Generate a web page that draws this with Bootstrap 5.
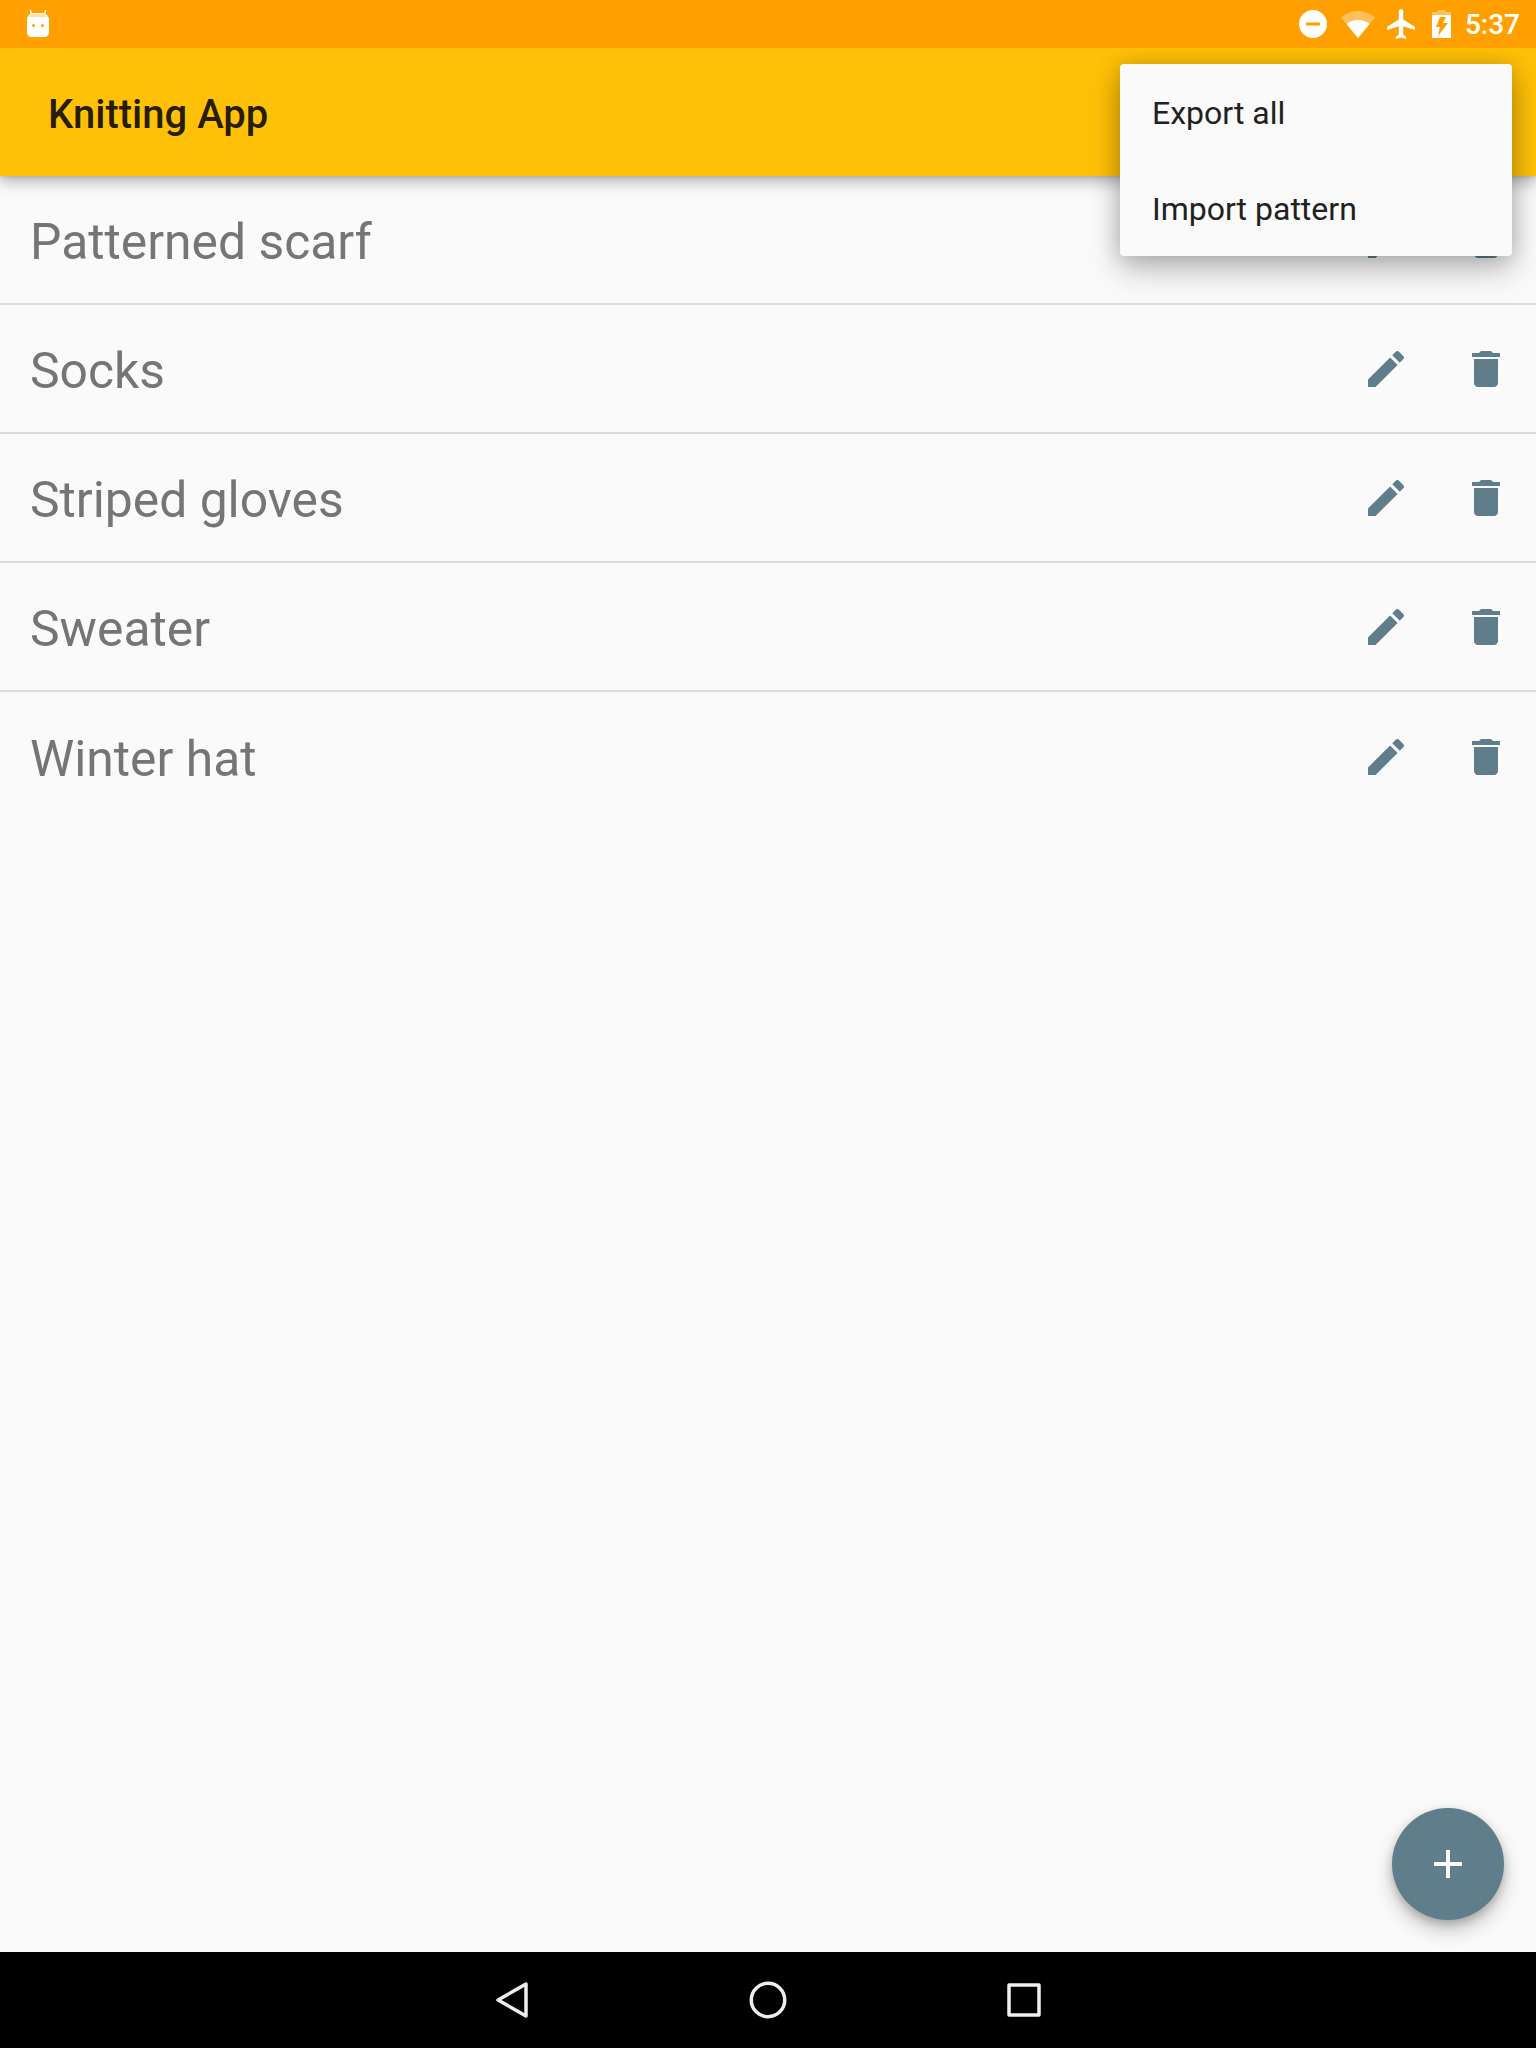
<!DOCTYPE html>
<html lang="en">
<head>
<meta charset="utf-8">
<title>Knitting App</title>
<link href="https://cdn.jsdelivr.net/npm/bootstrap@5.3.0/dist/css/bootstrap.min.css" rel="stylesheet">
<style>
html,body{height:100%;margin:0}
body{font-family:Roboto,"Liberation Sans",sans-serif;background:#fafafa}
.screen{height:2048px;overflow:hidden}
.status-strip{height:48px;background:#ffa000;color:#fff;z-index:30;padding:0 16px 0 27px}
.status-strip svg{display:block;fill:#fff}
.clock{font-size:28px;font-weight:500;line-height:48px;margin-left:14px;padding-top:2px}
.st-wifi{margin-left:14px}
.st-plane{margin-left:12px}
.st-batt{margin-left:17px}
.app-strip.navbar{height:128px;background:#ffc107;padding:6px 0 0 48px;z-index:20;box-shadow:0 6px 14px rgba(0,0,0,.28),0 1px 4px rgba(0,0,0,.12)}
.app-title.navbar-brand{font-size:40px;font-weight:500;color:rgba(0,0,0,.87);margin:0;padding:0;line-height:48px}
.content-area{background:#fafafa;min-height:0}
.knit-row.list-group-item{height:129px;padding:0 26px 0 30px;background:#fafafa;border-color:#dcdcdc;border-width:0 0 2px;border-radius:0}
.knit-name{font-size:49.800px;line-height:56px;color:#757575;padding-top:4px}
.knit-actions{gap:52px;padding-top:1px}
.knit-actions svg{width:48px;height:48px;fill:#607d8b;display:block}
.overflow-menu.dropdown-menu{position:absolute;top:-112px;left:1120px;right:24px;width:392px;min-width:0;padding:0;margin:0;background:#fafafa;border:0;border-radius:4px;z-index:25;box-shadow:0 14px 32px rgba(0,0,0,.22),0 2px 24px rgba(0,0,0,.2)}
.overflow-menu .dropdown-item{height:96px;padding:2px 32px 0;display:flex;align-items:center;font-size:32px;color:#212121}
.fab-add.btn{position:absolute;left:1392px;top:1632px;width:112px;height:112px;border:0;border-radius:50%;padding:0;background:#607d8b;box-shadow:0 10px 20px rgba(0,0,0,.22),0 4px 8px rgba(0,0,0,.18)}
.fab-add svg{display:block;margin:auto}
.nav-strip{height:96px;background:#000;z-index:30}
.nav-slot{width:256px}
.nav-slot svg{display:block;fill:none;stroke:#eee;stroke-width:3.500;stroke-linejoin:round}
</style>
</head>
<body>
<div class="screen d-flex flex-column">
  <div class="status-strip d-flex align-items-center flex-shrink-0 position-relative">
    <svg width="22" height="28" viewBox="0 0 22 28"><path d="M4.500 4.500 3.500 0.500M17.500 4.500 18.500 0.500" stroke="#fff" stroke-width="1.400" fill="none" stroke-linecap="round"/><path fill-rule="evenodd" d="M7 3h8c3.900 0 7 3 7 6.500V22c0 3-2 5-5 5H5c-3 0-5-2-5-5V9.500C0 6 3.100 3 7 3zM6.500 14a1.500 1.500 0 1 0 0 3 1.500 1.500 0 0 0 0-3zm9 0a1.500 1.500 0 1 0 0 3 1.500 1.500 0 0 0 0-3z"/><path fill="#ffdf9f" d="M7 4h8c2.400 0 4.400 1.100 5.500 3h-19C2.600 5.100 4.600 4 7 4z"/></svg>
    <div class="ms-auto d-flex align-items-center">
      <svg width="28" height="28" viewBox="2 2 20 20"><path d="M12 2C6.480 2 2 6.480 2 12s4.480 10 10 10 10-4.480 10-10S17.520 2 12 2zm5 11H7v-2h10v2z"/></svg>
      <svg class="st-wifi" width="34" height="28" viewBox="0 0 34 28"><path opacity=".35" d="M0 7.500C4.500 3.500 10.500 1 17 1s12.500 2.500 17 6.500L17 28z"/><path d="M5.500 14C9 11.500 12.800 10 17 10s8 1.500 11.500 4L17 28z"/></svg>
      <svg class="st-plane" width="28" height="30" viewBox="2 2 19 20" preserveAspectRatio="none"><path d="M21 16v-2l-8-5V3.500c0-.830-.670-1.500-1.500-1.500S10 2.670 10 3.500V9l-8 5v2l8-2.500V19l-2 1.500V22l3.500-1 3.500 1v-1.500L13 19v-5.500l8 2.500z"/></svg>
      <svg class="st-batt" width="19" height="28" viewBox="0 0 19 28"><path opacity=".35" d="M5.500 0h8v2H19v3H0V2h5.500z"/><path fill-rule="evenodd" d="M0 5h19v23H0zM8 7 4 17h4l-2 9 10-13h-5l3-6z"/></svg>
      <span class="clock">5:37</span>
    </div>
  </div>

  <nav class="navbar app-strip flex-shrink-0 position-relative">
    <span class="navbar-brand app-title">Knitting App</span>
  </nav>

  <main class="content-area flex-grow-1 position-relative">
    <div class="list-group list-group-flush">
      <div class="list-group-item knit-row d-flex align-items-center justify-content-between">
        <span class="knit-name">Patterned scarf</span>
        <div class="knit-actions d-flex">
          <svg viewBox="0 0 24 24"><path d="M3 17.250V21h3.750L17.810 9.940l-3.750-3.750L3 17.250zM20.710 7.040c.390-.390.390-1.020 0-1.410l-2.340-2.340c-.390-.390-1.020-.390-1.410 0l-1.830 1.830 3.750 3.750 1.830-1.830z"/></svg>
          <svg viewBox="0 0 24 24"><path d="M6 19c0 1.100.9 2 2 2h8c1.100 0 2-.9 2-2V7H6v12zM19 4h-3.500l-1-1h-5l-1 1H5v2h14V4z"/></svg>
        </div>
      </div>
      <div class="list-group-item knit-row d-flex align-items-center justify-content-between">
        <span class="knit-name">Socks</span>
        <div class="knit-actions d-flex">
          <svg viewBox="0 0 24 24"><path d="M3 17.250V21h3.750L17.810 9.940l-3.750-3.750L3 17.250zM20.710 7.040c.390-.390.390-1.020 0-1.410l-2.340-2.340c-.390-.390-1.020-.390-1.410 0l-1.830 1.830 3.750 3.750 1.830-1.830z"/></svg>
          <svg viewBox="0 0 24 24"><path d="M6 19c0 1.100.9 2 2 2h8c1.100 0 2-.9 2-2V7H6v12zM19 4h-3.500l-1-1h-5l-1 1H5v2h14V4z"/></svg>
        </div>
      </div>
      <div class="list-group-item knit-row d-flex align-items-center justify-content-between">
        <span class="knit-name">Striped gloves</span>
        <div class="knit-actions d-flex">
          <svg viewBox="0 0 24 24"><path d="M3 17.250V21h3.750L17.810 9.940l-3.750-3.750L3 17.250zM20.710 7.040c.390-.390.390-1.020 0-1.410l-2.340-2.340c-.390-.390-1.020-.390-1.410 0l-1.830 1.830 3.750 3.750 1.830-1.830z"/></svg>
          <svg viewBox="0 0 24 24"><path d="M6 19c0 1.100.9 2 2 2h8c1.100 0 2-.9 2-2V7H6v12zM19 4h-3.500l-1-1h-5l-1 1H5v2h14V4z"/></svg>
        </div>
      </div>
      <div class="list-group-item knit-row d-flex align-items-center justify-content-between">
        <span class="knit-name">Sweater</span>
        <div class="knit-actions d-flex">
          <svg viewBox="0 0 24 24"><path d="M3 17.250V21h3.750L17.810 9.940l-3.750-3.750L3 17.250zM20.710 7.040c.390-.390.390-1.020 0-1.410l-2.340-2.340c-.390-.390-1.020-.390-1.410 0l-1.830 1.830 3.750 3.750 1.830-1.830z"/></svg>
          <svg viewBox="0 0 24 24"><path d="M6 19c0 1.100.9 2 2 2h8c1.100 0 2-.9 2-2V7H6v12zM19 4h-3.500l-1-1h-5l-1 1H5v2h14V4z"/></svg>
        </div>
      </div>
      <div class="list-group-item knit-row d-flex align-items-center justify-content-between">
        <span class="knit-name">Winter hat</span>
        <div class="knit-actions d-flex">
          <svg viewBox="0 0 24 24"><path d="M3 17.250V21h3.750L17.810 9.940l-3.750-3.750L3 17.250zM20.710 7.040c.390-.390.390-1.020 0-1.410l-2.340-2.340c-.390-.390-1.020-.390-1.410 0l-1.830 1.830 3.750 3.750 1.830-1.830z"/></svg>
          <svg viewBox="0 0 24 24"><path d="M6 19c0 1.100.9 2 2 2h8c1.100 0 2-.9 2-2V7H6v12zM19 4h-3.500l-1-1h-5l-1 1H5v2h14V4z"/></svg>
        </div>
      </div>
    </div>

    <ul class="dropdown-menu show overflow-menu">
      <li><a class="dropdown-item" href="#">Export all</a></li>
      <li><a class="dropdown-item" href="#">Import pattern</a></li>
    </ul>

    <button class="btn fab-add" type="button" aria-label="Add">
      <svg width="28" height="28" viewBox="0 0 28 28"><path fill="#fff" d="M12 0h4v12h12v4H16v12h-4V16H0v-4h12z"/></svg>
    </button>
  </main>

  <div class="nav-strip d-flex align-items-center justify-content-center flex-shrink-0 position-relative">
    <div class="nav-slot d-flex justify-content-center">
      <svg width="36" height="40" viewBox="0 0 36 40"><path d="M32 4v32L4 20z"/></svg>
    </div>
    <div class="nav-slot d-flex justify-content-center">
      <svg width="38" height="38" viewBox="0 0 38 38"><circle cx="19" cy="19" r="16.750"/></svg>
    </div>
    <div class="nav-slot d-flex justify-content-center">
      <svg width="34" height="34" viewBox="0 0 34 34"><rect x="2" y="2" width="30" height="30"/></svg>
    </div>
  </div>
</div>
<script src="https://cdn.jsdelivr.net/npm/bootstrap@5.3.0/dist/js/bootstrap.bundle.min.js"></script>
</body>
</html>
